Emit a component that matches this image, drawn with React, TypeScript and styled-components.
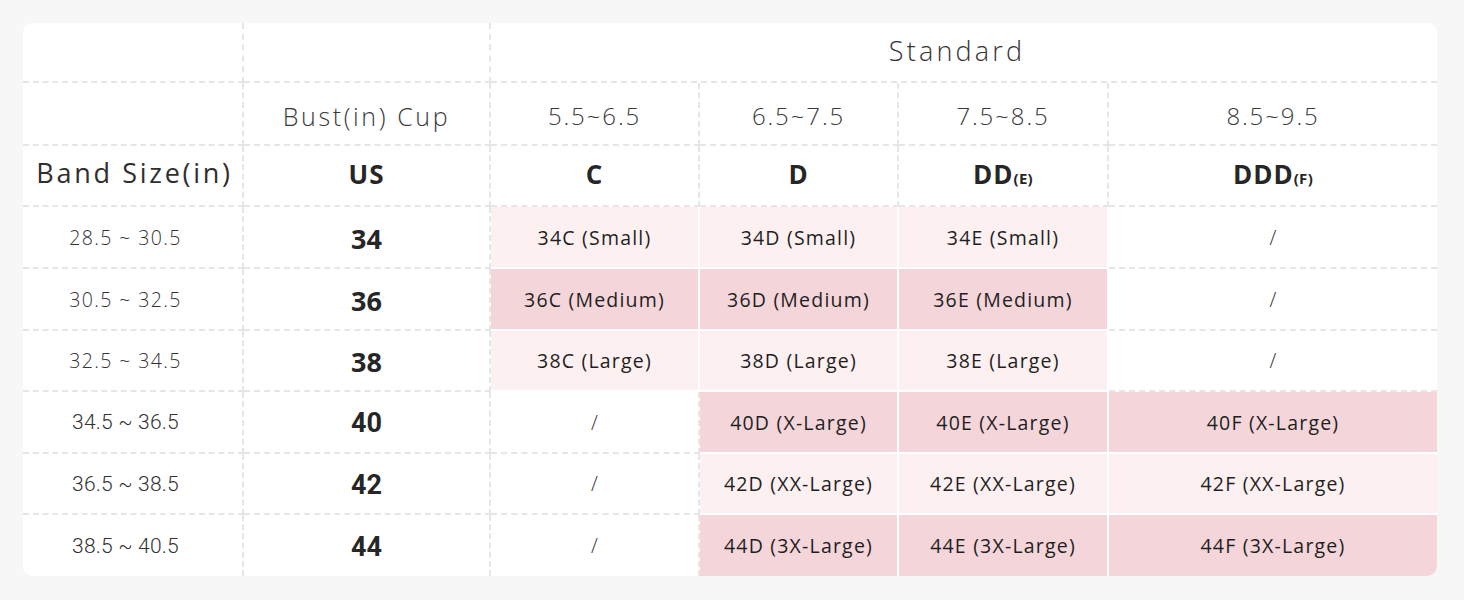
import React from "react";
import styled, { createGlobalStyle } from "styled-components";

type Tone = "none" | "light" | "medium";

interface SizeRow {
  band: string;
  us: string;
  condensed?: boolean;
  cells: { label: string; tone: Tone }[];
}

const GlobalStyle = createGlobalStyle`
  html, body {
    margin: 0;
    padding: 0;
    background: #f7f7f7;
  }
  body {
    font-family: "Open Sans", "Noto Sans", sans-serif;
    color: #2b2b2b;
  }
`;

const Page = styled.div`
  padding: 23px 27px 24px 23px;
`;

const Card = styled.div`
  width: 1414px;
  background: #ffffff;
  border-radius: 10px;
  overflow: hidden;
  display: grid;
  grid-template-columns: 221px 247px 209px 199px 210px 328px;
  grid-template-rows: 60px 63px 61px 62px 62px 61px 62px 61px 61px;
`;

const Cell = styled.div<{ $tone?: Tone; $span?: number; $lastCol?: boolean; $lastRow?: boolean }>`
  box-sizing: border-box;
  display: flex;
  align-items: center;
  justify-content: center;
  grid-column: ${(p) => (p.$span ? `span ${p.$span}` : "auto")};
  background: ${(p) =>
    p.$tone === "medium" ? "#f4d5d9" : p.$tone === "light" ? "#fdf0f1" : "#ffffff"};
  border-right: ${(p) =>
    p.$lastCol ? "none" : p.$tone && p.$tone !== "none" ? "2px solid #ffffff" : "2px dashed #e6e6e6"};
  border-bottom: ${(p) =>
    p.$lastRow ? "none" : p.$tone && p.$tone !== "none" ? "2px solid #ffffff" : "2px dashed #e6e6e6"};
  white-space: nowrap;
`;

const TitleText = styled.span`
  font-size: 27px;
  font-weight: 300;
  letter-spacing: 3.2px;
  color: #333333;
  transform: translate(-7px, -2px);
`;

const RangeText = styled.span<{ $bust?: boolean }>`
  font-size: ${(p) => (p.$bust ? "25px" : "24px")};
  font-weight: 300;
  letter-spacing: ${(p) => (p.$bust ? "2.6px" : "1.9px")};
  color: #3a3a3a;
  transform: translateY(2px);
`;

const BandLabel = styled.span`
  font-size: 27px;
  font-weight: 400;
  letter-spacing: 2.7px;
  color: #2f2f2f;
  transform: translate(2px, -3px);
`;

const CupLabel = styled.span`
  font-size: 26px;
  font-weight: 700;
  letter-spacing: 1px;
  color: #262626;
  transform: translateY(-2px);
`;

const CupSub = styled.span`
  font-size: 15px;
  font-weight: 700;
  letter-spacing: 0.3px;
`;

const BandValue = styled.span<{ $condensed?: boolean }>`
  font-family: ${(p) =>
    p.$condensed ? `Roboto, "Liberation Sans", sans-serif` : `"Open Sans", "Noto Sans", sans-serif`};
  font-size: ${(p) => (p.$condensed ? "21px" : "19.5px")};
  font-weight: 300;
  letter-spacing: ${(p) => (p.$condensed ? "0.2px" : "1.4px")};
  color: #333333;
  transform: translateX(-7px);
`;

const UsValue = styled.span<{ $condensed?: boolean }>`
  font-family: ${(p) =>
    p.$condensed ? `Roboto, "Liberation Sans", sans-serif` : `"Open Sans", "Noto Sans", sans-serif`};
  font-size: 27px;
  font-weight: 700;
  color: #262626;
  transform: translateY(1px);
`;

const SizeText = styled.span`
  font-size: 19.5px;
  font-weight: 500;
  letter-spacing: 1.2px;
  color: #1f1f1f;
`;

const Slash = styled.span`
  font-size: 20px;
  font-weight: 300;
  color: #333333;
`;

const ranges = ["5.5~6.5", "6.5~7.5", "7.5~8.5", "8.5~9.5"];

const cups: { main: string; sub?: string }[] = [
  { main: "C" },
  { main: "D" },
  { main: "DD", sub: "(E)" },
  { main: "DDD", sub: "(F)" },
];

const rows: SizeRow[] = [
  {
    band: "28.5 ~ 30.5",
    us: "34",
    cells: [
      { label: "34C (Small)", tone: "light" },
      { label: "34D (Small)", tone: "light" },
      { label: "34E (Small)", tone: "light" },
      { label: "/", tone: "none" },
    ],
  },
  {
    band: "30.5 ~ 32.5",
    us: "36",
    cells: [
      { label: "36C (Medium)", tone: "medium" },
      { label: "36D (Medium)", tone: "medium" },
      { label: "36E (Medium)", tone: "medium" },
      { label: "/", tone: "none" },
    ],
  },
  {
    band: "32.5 ~ 34.5",
    us: "38",
    cells: [
      { label: "38C (Large)", tone: "light" },
      { label: "38D (Large)", tone: "light" },
      { label: "38E (Large)", tone: "light" },
      { label: "/", tone: "none" },
    ],
  },
  {
    band: "34.5 ~ 36.5",
    us: "40",
    condensed: true,
    cells: [
      { label: "/", tone: "none" },
      { label: "40D (X-Large)", tone: "medium" },
      { label: "40E (X-Large)", tone: "medium" },
      { label: "40F (X-Large)", tone: "medium" },
    ],
  },
  {
    band: "36.5 ~ 38.5",
    us: "42",
    condensed: true,
    cells: [
      { label: "/", tone: "none" },
      { label: "42D (XX-Large)", tone: "light" },
      { label: "42E (XX-Large)", tone: "light" },
      { label: "42F (XX-Large)", tone: "light" },
    ],
  },
  {
    band: "38.5 ~ 40.5",
    us: "44",
    condensed: true,
    cells: [
      { label: "/", tone: "none" },
      { label: "44D (3X-Large)", tone: "medium" },
      { label: "44E (3X-Large)", tone: "medium" },
      { label: "44F (3X-Large)", tone: "medium" },
    ],
  },
];

export default function App() {
  return (
    <>
      <GlobalStyle />
      <Page>
        <Card>
          {/* 1행: 제목 */}
          <Cell />
          <Cell />
          <Cell $span={4} $lastCol>
            <TitleText>Standard</TitleText>
          </Cell>

          {/* 2행: 가슴둘레 차이 */}
          <Cell />
          <Cell>
            <RangeText $bust>Bust(in) Cup</RangeText>
          </Cell>
          {ranges.map((r, i) => (
            <Cell key={r} $lastCol={i === ranges.length - 1}>
              <RangeText>{r}</RangeText>
            </Cell>
          ))}

          {/* 3행: 컵 */}
          <Cell>
            <BandLabel>Band Size(in)</BandLabel>
          </Cell>
          <Cell>
            <CupLabel>US</CupLabel>
          </Cell>
          {cups.map((c, i) => (
            <Cell key={c.main} $lastCol={i === cups.length - 1}>
              <CupLabel>
                {c.main}
                {c.sub && <CupSub>{c.sub}</CupSub>}
              </CupLabel>
            </Cell>
          ))}

          {rows.map((row, ri) => {
            const lastRow = ri === rows.length - 1;
            return (
              <React.Fragment key={row.us}>
                <Cell $lastRow={lastRow}>
                  <BandValue $condensed={row.condensed}>{row.band}</BandValue>
                </Cell>
                <Cell $lastRow={lastRow}>
                  <UsValue $condensed={row.condensed}>{row.us}</UsValue>
                </Cell>
                {row.cells.map((c, ci) => (
                  <Cell
                    key={ci}
                    $tone={c.tone}
                    $lastRow={lastRow}
                    $lastCol={ci === row.cells.length - 1}
                  >
                    {c.label === "/" ? <Slash>/</Slash> : <SizeText>{c.label}</SizeText>}
                  </Cell>
                ))}
              </React.Fragment>
            );
          })}
        </Card>
      </Page>
    </>
  );
}
